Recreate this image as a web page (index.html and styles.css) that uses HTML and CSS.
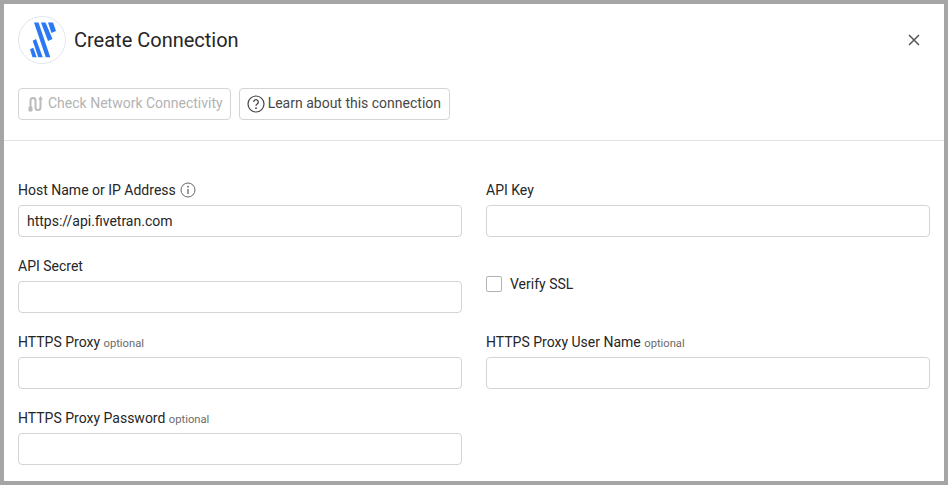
FILE: index.html
```html
<!DOCTYPE html>
<html lang="en">
<head>
  <meta charset="UTF-8">
  <title>Create Connection</title>
  <link rel="stylesheet" href="styles.css">
</head>
<body>

  <div class="dialog">
    <!-- Title row -->
    <header class="dialog-header">
      <span class="logo">
        <svg width="48" height="48" viewBox="0 0 48 48">
          <circle cx="24" cy="24" r="23.5" fill="#fff" stroke="#e2e5f0"/>
          <g fill="#2b78f5">
            <polygon points="16,6.500 20.500,6.500 32.300,41.300 27.800,41.300"/>
            <polygon points="23,6.500 27.500,6.500 34.500,23 30,25"/>
            <polygon points="30,6.500 35,6.500 38,15 33.500,17"/>
            <polygon points="14.700,24.700 18,23 24.700,41.300 20.300,41.300"/>
            <polygon points="12,33.300 15.300,31.700 18.700,41.300 14.500,41.300"/>
          </g>
        </svg>
      </span>
      <h1>Create Connection</h1>
      <button class="close" aria-label="Close">
        <svg width="12" height="12" viewBox="0 0 12 12">
          <path d="M1 1l10 10M11 1L1 11" stroke="#555" stroke-width="1.500"/>
        </svg>
      </button>
    </header>

    <!-- Toolbar -->
    <div class="toolbar">
      <button class="tool-button" disabled>
        <svg width="19" height="18" viewBox="0 0 19 18">
          <path d="M4.500 13V5.500a2.500 2.500 0 0 1 5 0v7a2.500 2.500 0 0 0 5 0V4" fill="none" stroke="#bbb" stroke-width="2"/>
          <rect x="2.500" y="11.500" width="4" height="5" rx="1" fill="#bbb"/>
          <path d="M14.500 1l2.400 3.500h-4.800z" fill="#bbb"/>
        </svg>
        Check Network Connectivity
      </button>
      <button class="tool-button">
        <svg width="18" height="18" viewBox="0 0 18 18">
          <circle cx="9" cy="9" r="8" fill="none" stroke="#444" stroke-width="1.200"/>
          <path d="M6.700 7a2.300 2.300 0 1 1 3.500 2c-.8.500-1.200.9-1.200 1.800" fill="none" stroke="#444" stroke-width="1.300"/>
          <circle cx="9" cy="13.200" r=".9" fill="#444"/>
        </svg>
        Learn about this connection
      </button>
    </div>

    <!-- Connection form -->
    <form class="form-grid">
      <div class="field">
        <label>Host Name or IP Address <svg class="info" width="16" height="16" viewBox="0 0 16 16">
            <circle cx="8" cy="8" r="7" fill="none" stroke="#666"/>
            <path d="M8 7v5" stroke="#666" stroke-width="1.300"/>
            <circle cx="8" cy="4.700" r=".9" fill="#666"/>
          </svg></label>
        <input type="text" value="https://api.fivetran.com">
      </div>
      <div class="field">
        <label>API Key</label>
        <input type="text">
      </div>
      <div class="field">
        <label>API Secret</label>
        <input type="text">
      </div>
      <div class="check-field">
        <span class="checkbox"></span>
        <span>Verify SSL</span>
      </div>
      <div class="field">
        <label>HTTPS Proxy <small>optional</small></label>
        <input type="text">
      </div>
      <div class="field">
        <label>HTTPS Proxy User Name <small>optional</small></label>
        <input type="text">
      </div>
      <div class="field">
        <label>HTTPS Proxy Password <small>optional</small></label>
        <input type="text">
      </div>
    </form>
  </div>

</body>
</html>
```

FILE: styles.css
```css
* {
  margin: 0;
  padding: 0;
  box-sizing: border-box;
}

body {
  font-family: Roboto, "Liberation Sans", sans-serif;
  font-size: 14px;
  color: #262626;
  background-color: #fff;
}

/* Dialog frame */
.dialog {
  width: 948px;
  height: 485px;
  border: 4px solid #a5a5a5;
  background-color: #fff;
  overflow: hidden;
}

.dialog-header {
  display: flex;
  align-items: center;
  height: 48px;
  margin-top: 12px;
  padding: 0 24px 0 14px;
}

.logo {
  display: flex;
  width: 48px;
  height: 48px;
  margin-right: 8px;
}

.dialog-header h1 {
  flex-grow: 1;
  font-size: 20px;
  font-weight: 400;
  line-height: 24px;
}

.close {
  display: flex;
  border: none;
  background: none;
}

/* Toolbar */
.toolbar {
  display: flex;
  gap: 8px;
  height: 53px;
  margin-top: 24px;
  padding: 0 14px;
  border-bottom: 1px solid #e3e3e3;
}

.tool-button {
  display: flex;
  align-items: center;
  gap: 3px;
  height: 32px;
  padding: 0 8px 2px 7px;
  border: 1px solid #d4d4d4;
  border-radius: 4px;
  background-color: #fff;
  color: #474747;
  font-family: inherit;
  font-size: 14px;
}

.tool-button svg {
  margin-top: 2px;
}

.tool-button:disabled {
  padding-right: 7px;
  color: #b3b3b3;
}

/* Form */
.form-grid {
  display: grid;
  grid-template-columns: 444px 444px;
  grid-auto-rows: 76px;
  column-gap: 24px;
  padding: 40px 14px 0;
}

.field {
  display: flex;
  flex-direction: column;
}

.field label {
  display: block;
  height: 18px;
  padding-top: 1px;
  margin-bottom: 6px;
  line-height: 17px;
}

.field label small {
  color: #6b6b6b;
  font-size: 11.2px;
}

.info {
  margin-left: 1px;
  vertical-align: -3px;
}

.field input {
  height: 32px;
  padding: 0 8px;
  border: 1px solid #d4d4d4;
  border-radius: 4px;
  color: #262626;
  font-family: inherit;
  font-size: 14px;
}

.check-field {
  display: flex;
  align-items: center;
  gap: 8px;
  height: 24px;
  margin-top: 15px;
}

.checkbox {
  width: 16px;
  height: 16px;
  border: 1px solid #b3b3b3;
  border-radius: 2px;
}
```
